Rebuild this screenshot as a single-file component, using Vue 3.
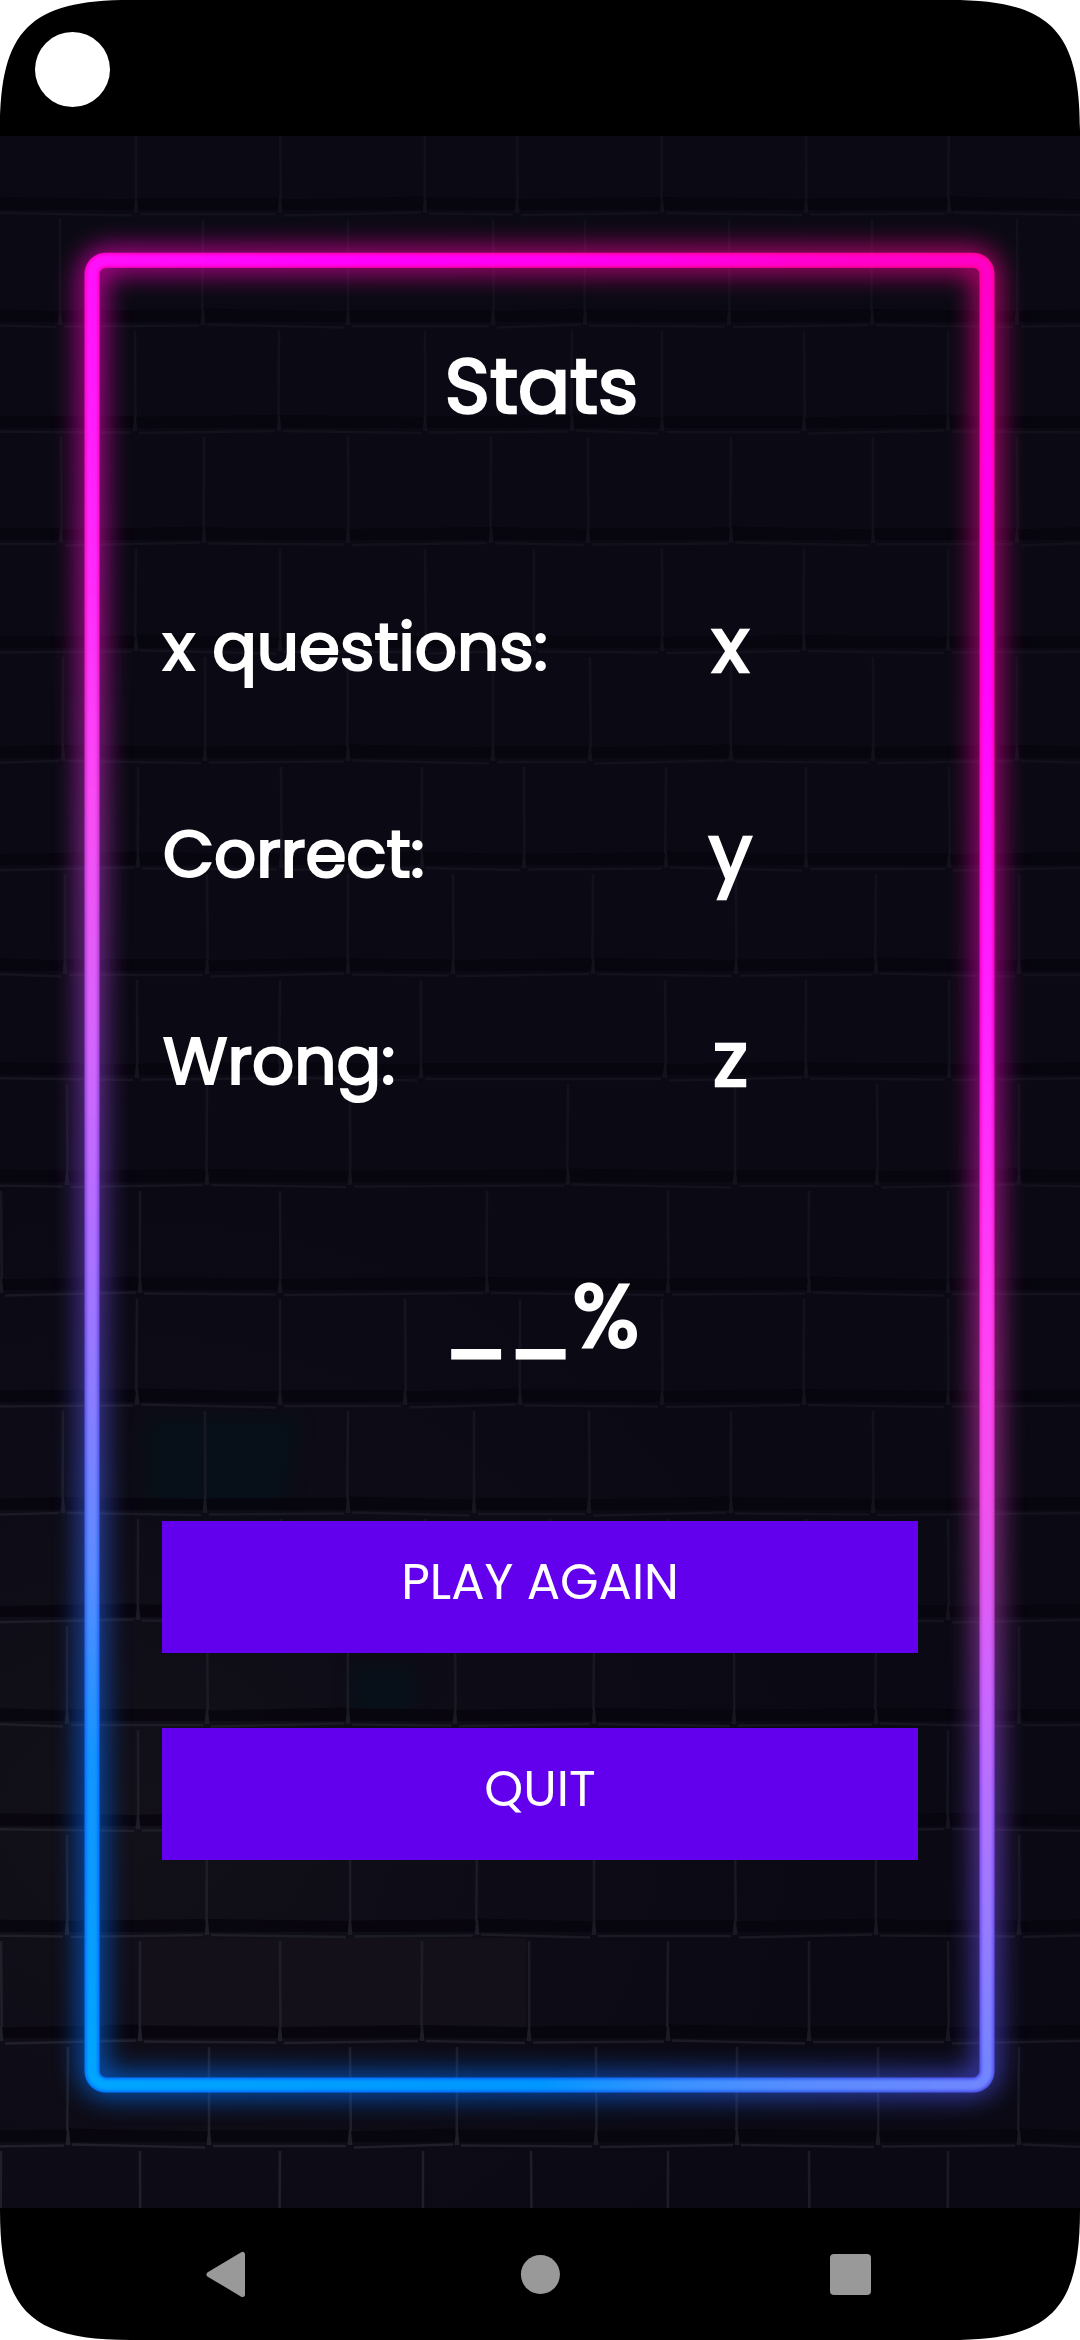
<script setup>
const stats = [
  { label: 'x questions:', value: 'x', cls: 'questions' },
  { label: 'Correct:', value: 'y', cls: 'correct' },
  { label: 'Wrong:', value: 'z', cls: 'wrong' },
]
const actions = [
  { label: 'PLAY AGAIN', cls: 'play' },
  { label: 'QUIT', cls: 'quit' },
]

// Brick courses: top edge, bottom edge and the x of every vertical joint.
const courseEdges = [100, 213, 325, 431, 543, 651, 761, 868, 974, 1078, 1185, 1293, 1405, 1513, 1620, 1724, 1829, 1935, 2041, 2145, 2260]
const joints = [
  [136, 280, 425, 517, 662, 806, 949],
  [60, 203, 348, 493, 585, 729, 872, 1017],
  [135, 279, 425, 572, 662, 804, 948],
  [61, 204, 348, 491, 588, 731, 873, 1017],
  [136, 280, 425, 534, 662, 804, 948],
  [63, 205, 348, 493, 590, 731, 873, 1017],
  [138, 281, 422, 524, 666, 806, 949],
  [65, 207, 348, 453, 593, 736, 876, 1019],
  [137, 280, 421, 665, 806, 949],
  [67, 207, 350, 568, 735, 877, 1019],
  [1, 140, 280, 487, 668, 809, 948],
  [137, 280, 405, 520, 662, 804, 948],
  [63, 205, 348, 474, 589, 731, 873],
  [138, 281, 425, 550, 667, 806, 948],
  [67, 207, 348, 455, 594, 734, 876, 1019],
  [138, 281, 420, 540, 667, 806, 948],
  [67, 207, 350, 477, 594, 735, 876, 1019],
  [1, 140, 280, 422, 529, 668, 809, 948],
  [68, 209, 350, 457, 596, 737, 878, 1019],
  [1, 140, 280, 423, 531, 668, 809, 948],
]
const wobble = (n) => ((n * 37) % 7) - 3

const bricks = joints.flatMap((xs, row) => {
  const edges = [-20, ...xs, 1100]
  const top = courseEdges[row]
  const bottom = courseEdges[row + 1]
  return edges.slice(0, -1).map((x, i) => {
    const end = edges[i + 1]
    const seed = row * 11 + i * 5
    const w = wobble(seed) * 0.5
    return {
      key: `${row}-${i}`,
      shade: `M${x} ${bottom - 15 + w}L${end} ${bottom - 15 - w}L${end} ${bottom - 3}L${x} ${bottom - 3}Z`,
      ledge: `M${x + 4} ${bottom + 1 + w}L${(x + end) / 2} ${bottom + 1}L${end - 4} ${bottom + 1 - w}`,
      joint: `M${x} ${top + 6}L${x + w * 0.5} ${bottom - 14}`,
      foot: `M${x - 1} ${bottom - 15}L${x + 1} ${bottom - 15}L${x + 2.5} ${bottom}L${x - 2.5} ${bottom}Z`,
    }
  })
})

const sides = [
  { id: 'top', d: 'M96.1 264.3A14 14 0 0 1 106 260.2H973A14 14 0 0 1 982.9 264.3', x1: 92, y1: 0, x2: 987, y2: 0,
    core: [[0, '#ff10fb'], [0.3, '#ff00ff'], [0.6, '#ff00ee'], [0.8, '#ff00d0'], [1, '#ff00c4']],
    edge: [[0, '#ff00c8'], [0.5, '#ff00a4'], [1, '#ff0094']] },
  { id: 'right', d: 'M982.9 264.3A14 14 0 0 1 987 274.2V2071A14 14 0 0 1 982.9 2080.9', x1: 0, y1: 260, x2: 0, y2: 2085,
    core: [[0, '#ff00c4'], [0.08, '#ff00e4'], [0.2, '#ff00ff'], [0.4, '#ff20ff'], [0.58, '#ff40f6'], [0.68, '#f050ee'], [0.78, '#cc66ff'], [0.88, '#a478ff'], [1, '#7086ff']],
    edge: [[0, '#ff0094'], [0.3, '#ff00b0'], [0.42, '#f000c8'], [0.6, '#f02cc8'], [0.72, '#c840c4'], [0.84, '#8a4ae8'], [1, '#4a4ee8']] },
  { id: 'bottom', d: 'M982.9 2080.9A14 14 0 0 1 973 2085H106A14 14 0 0 1 96.1 2080.9', x1: 92, y1: 0, x2: 987, y2: 0,
    core: [[0, '#00a6ff'], [0.5, '#0096ff'], [0.65, '#3a92ff'], [0.8, '#5a8cff'], [1, '#7086ff']],
    edge: [[0, '#0072ff'], [0.5, '#0068f4'], [0.75, '#2c60ec'], [1, '#4a4ee8']] },
  { id: 'left', d: 'M96.1 2080.9A14 14 0 0 1 92 2071V274.2A14 14 0 0 1 96.1 264.3', x1: 0, y1: 260, x2: 0, y2: 2085,
    core: [[0, '#ff10fb'], [0.18, '#ff2cfa'], [0.3, '#f84cf4'], [0.42, '#d664fa'], [0.52, '#b46eff'], [0.62, '#8c7cff'], [0.72, '#5a8cff'], [0.82, '#1494ff'], [1, '#00a6ff']],
    edge: [[0, '#ff00c8'], [0.2, '#f010c8'], [0.32, '#c434d0'], [0.44, '#9a40d8'], [0.58, '#6a48dc'], [0.7, '#3660ec'], [0.84, '#006cff'], [1, '#0072ff']] },
]
</script>

<template>
  <div class="screen">
    <header class="status"><span class="camera"></span></header>

    <main class="stage">
      <svg class="backdrop" viewBox="0 136 1080 2072" aria-hidden="true">
        <defs>
          <linearGradient id="mortar" gradientUnits="userSpaceOnUse" x1="1000" y1="600" x2="0" y2="1900">
            <stop offset="0" stop-color="#10111a" />
            <stop offset="0.5" stop-color="#13131d" />
            <stop offset="1" stop-color="#20202a" />
          </linearGradient>
          <radialGradient id="haze" gradientUnits="userSpaceOnUse" cx="120" cy="1800" r="700" gradientTransform="translate(0 200) scale(1 .9)">
            <stop offset="0" stop-color="#15121a" stop-opacity="0.75" />
            <stop offset="1" stop-color="#100d18" stop-opacity="0" />
          </radialGradient>
          <filter id="soft" x="-20%" y="-20%" width="140%" height="140%" color-interpolation-filters="sRGB"><feGaussianBlur stdDeviation="0.7" /></filter>
          <filter id="stain" x="-30%" y="-30%" width="160%" height="160%" color-interpolation-filters="sRGB"><feGaussianBlur stdDeviation="8" /></filter>
          <filter id="glow" filterUnits="userSpaceOnUse" x="0" y="136" width="1080" height="2072" color-interpolation-filters="sRGB"><feGaussianBlur stdDeviation="14" /></filter>
          <filter id="core" filterUnits="userSpaceOnUse" x="60" y="230" width="960" height="1890" color-interpolation-filters="sRGB"><feGaussianBlur stdDeviation="1.8" /></filter>
          <template v-for="s in sides" :key="s.id">
            <linearGradient :id="'core-' + s.id" gradientUnits="userSpaceOnUse" :x1="s.x1" :y1="s.y1" :x2="s.x2" :y2="s.y2">
              <stop v-for="c in s.core" :key="c[0]" :offset="c[0]" :stop-color="c[1]" />
            </linearGradient>
            <linearGradient :id="'edge-' + s.id" gradientUnits="userSpaceOnUse" :x1="s.x1" :y1="s.y1" :x2="s.x2" :y2="s.y2">
              <stop v-for="c in s.edge" :key="c[0]" :offset="c[0]" :stop-color="c[1]" />
            </linearGradient>
          </template>
        </defs>

        <rect y="136" width="1080" height="2072" fill="#0b0a14" />
        <rect y="136" width="1080" height="2072" fill="url(#haze)" />
        <path d="M140 1938H526V2028H140Z" fill="#13101a" />
        <path d="M145 1418H300L285 1510H145ZM350 1665H415V1715H350Z" fill="#061119" opacity="0.8" filter="url(#stain)" />
        <g filter="url(#soft)">
          <template v-for="b in bricks" :key="b.key">
            <path :d="b.shade" fill="#05030c" opacity="0.7" />
            <path :d="b.ledge" fill="none" stroke="url(#mortar)" stroke-width="2.6" />
            <path :d="b.joint" fill="none" stroke="url(#mortar)" stroke-width="2.6" />
            <path :d="b.foot" fill="url(#mortar)" />
          </template>
        </g>

        <g fill="none">
          <g filter="url(#glow)" stroke-width="20" opacity="0.9">
            <path v-for="s in sides" :key="s.id" :d="s.d" :stroke="`url(#edge-${s.id})`" />
          </g>
          <g stroke-width="15">
            <path v-for="s in sides" :key="s.id" :d="s.d" :stroke="`url(#edge-${s.id})`" stroke-linecap="round" />
          </g>
          <g filter="url(#core)" stroke-width="11">
            <path v-for="s in sides" :key="s.id" :d="s.d" :stroke="`url(#core-${s.id})`" stroke-linecap="round" />
          </g>
        </g>
      </svg>

      <h1 class="title">Stats</h1>
      <dl class="stats">
        <div v-for="s in stats" :key="s.cls" class="row">
          <dt class="label" :class="s.cls">{{ s.label }}</dt>
          <dd class="value">{{ s.value }}</dd>
        </div>
      </dl>
      <p class="percent">__%</p>
      <div class="actions">
        <button v-for="a in actions" :key="a.cls" class="action" :class="a.cls">{{ a.label }}</button>
      </div>
    </main>

    <nav class="nav">
      <svg width="42" height="48" viewBox="0 0 42 48"><path d="M4 24.5L37.500 4.500V44.500Z" fill="#999" stroke="#999" stroke-width="5" stroke-linejoin="round" /></svg>
      <svg width="42" height="48" viewBox="0 0 42 48"><circle cx="22.400" cy="24.500" r="19.500" fill="#999" /></svg>
      <svg width="42" height="48" viewBox="0 0 42 48"><rect x="0" y="4" width="41" height="41" rx="4" fill="#999" /></svg>
    </nav>

    <svg class="corners" viewBox="0 0 1080 2340" fill="#fff" aria-hidden="true">
      <path d="M0 0H130C30 0 0 30 0 130Z" />
      <path d="M1080 0H950C1050 0 1080 30 1080 130Z" />
      <path d="M0 2340H130C30 2340 0 2310 0 2210Z" />
      <path d="M1080 2340H950C1050 2340 1080 2310 1080 2210Z" />
    </svg>
  </div>
</template>

<style>
body {
  margin: 0;
  background: #fff;
}
</style>

<style scoped>
.screen {
  position: relative;
  display: flex;
  flex-direction: column;
  width: 1080px;
  height: 2340px;
  overflow: hidden;
  background: #000;
  color: #fff;
  font-family: Poppins, Inter, "Open Sans", sans-serif;
  font-weight: 400;
}
.status {
  box-sizing: border-box;
  height: 136px;
  padding: 32px 35px;
}
.camera {
  display: block;
  width: 75px;
  height: 75px;
  border-radius: 50%;
  background: #fff;
}
.stage {
  position: relative;
  box-sizing: border-box;
  display: flex;
  flex-direction: column;
  height: 2072px;
  padding: 200px 162px 0;
  isolation: isolate;
}
.backdrop {
  position: absolute;
  inset: 0;
  z-index: -1;
  width: 1080px;
  height: 2072px;
}
.title,
.label,
.value,
.percent {
  -webkit-text-stroke: 0.034em #fff;
}
.title {
  margin: 0 0 107px;
  padding-left: 3px;
  font-size: 77px;
  font-weight: 400;
  line-height: 100px;
  text-align: center;
}
.stats {
  margin: 0;
}
.row {
  display: flex;
  align-items: center;
  height: 207px;
}
.label {
  box-sizing: border-box;
  width: 473px;
  padding: 1px 0 0 1px;
  font-size: 66px;
  white-space: nowrap;
}
.value {
  width: 191px;
  margin: 0;
  padding-bottom: 3px;
  font-size: 77px;
  line-height: 100px;
  text-align: center;
}
.percent {
  margin: 93px 0 144px;
  padding-left: 3px;
  font-size: 88px;
  line-height: 120px;
  text-align: center;
}
.actions {
  display: flex;
  flex-direction: column;
  gap: 75px;
}
.action {
  height: 132px;
  padding: 0 0 11px;
  border: 0;
  background: #6200ee;
  color: #fff;
  font: inherit;
  font-size: 49.5px;
}
.nav {
  display: flex;
  justify-content: space-between;
  height: 132px;
  box-sizing: border-box;
  padding: 42px 208px 0 205px;
}
.corners {
  position: absolute;
  inset: 0;
  width: 1080px;
  height: 2340px;
  pointer-events: none;
}
</style>
